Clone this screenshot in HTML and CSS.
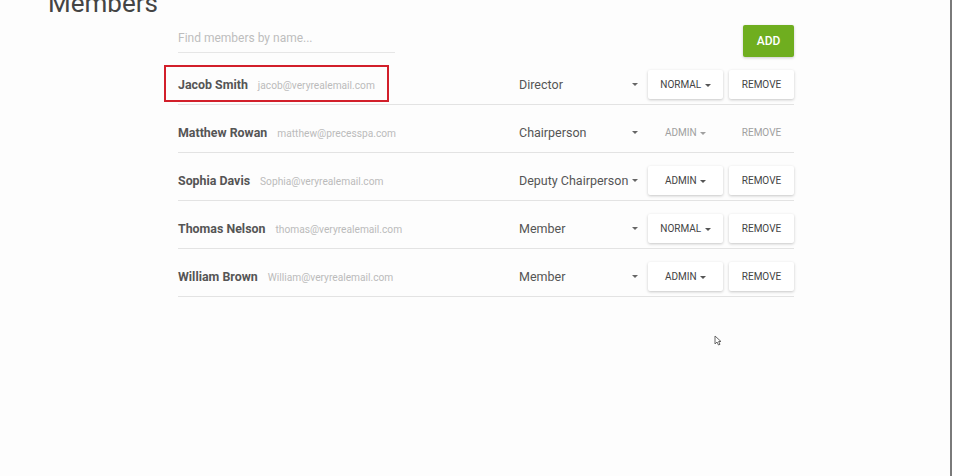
FILE: index.html
```html
<!DOCTYPE html>
<html>
<head>
<meta charset="utf-8">
<link rel="stylesheet" href="styles.css">
</head>
<body>
<div class="page">
  <h1 class="title">Members</h1>
  <div class="panel">
    <div class="toolbar">
      <div class="search">Find members by name...</div>
      <button class="add">ADD</button>
    </div>
    <div class="row">
      <div class="highlight"></div>
      <div class="who"><span class="name">Jacob Smith</span><span class="email">jacob@veryrealemail.com</span></div>
      <div class="role"><span>Director</span><span class="caret"></span></div>
      <button class="btn perm">NORMAL <span class="caret small"></span></button>
      <button class="btn remove">REMOVE</button>
    </div>
    <div class="row">
      <div class="who"><span class="name">Matthew Rowan</span><span class="email">matthew@precesspa.com</span></div>
      <div class="role"><span>Chairperson</span><span class="caret"></span></div>
      <button class="btn perm flat">ADMIN <span class="caret small"></span></button>
      <button class="btn remove flat">REMOVE</button>
    </div>
    <div class="row">
      <div class="who"><span class="name">Sophia Davis</span><span class="email">Sophia@veryrealemail.com</span></div>
      <div class="role"><span>Deputy Chairperson</span><span class="caret"></span></div>
      <button class="btn perm">ADMIN <span class="caret small"></span></button>
      <button class="btn remove">REMOVE</button>
    </div>
    <div class="row">
      <div class="who"><span class="name">Thomas Nelson</span><span class="email">thomas@veryrealemail.com</span></div>
      <div class="role"><span>Member</span><span class="caret"></span></div>
      <button class="btn perm">NORMAL <span class="caret small"></span></button>
      <button class="btn remove">REMOVE</button>
    </div>
    <div class="row">
      <div class="who"><span class="name">William Brown</span><span class="email">William@veryrealemail.com</span></div>
      <div class="role"><span>Member</span><span class="caret"></span></div>
      <button class="btn perm">ADMIN <span class="caret small"></span></button>
      <button class="btn remove">REMOVE</button>
    </div>
    <svg class="cursor" width="8" height="11" viewBox="0 0 8 11"><path d="M1 1 L1 9 L3 7 L4.5 10 L6 9.3 L4.6 6.5 L7 6.5 Z" fill="#fff" stroke="#666" stroke-width="1"/></svg>
  </div>
</div>
</body>
</html>
```
FILE: styles.css
```css
* { box-sizing: border-box; }
html, body { margin: 0; padding: 0; background: #fff; }
body { font-family: Roboto, "Liberation Sans", sans-serif; color: #555; }
.page {
  width: 952px;
  height: 476px;
  background: #fdfdfd;
  border-right: 2px solid #7a7a7a;
  overflow: hidden;
  position: relative;
}
.title {
  margin: -12px 0 0 48px;
  font-size: 26px;
  line-height: 30px;
  font-weight: 400;
  color: #444;
}
.panel {
  position: relative;
  margin: 7px 0 0 178px;
  width: 616px;
}
.toolbar {
  display: flex;
  justify-content: space-between;
  align-items: flex-start;
  height: 32px;
}
.search {
  margin-top: 2px;
  width: 217px;
  height: 26px;
  font-size: 12px;
  line-height: 22px;
  color: #bdbdbd;
  border-bottom: 1px solid #e6e6e6;
}
.add {
  width: 51px;
  height: 32px;
  border: none;
  border-radius: 2px;
  background: #6fae1f;
  color: #fff;
  font-family: Roboto, "Liberation Sans", sans-serif;
  font-size: 12px;
  font-weight: 500;
  padding: 0;
  box-shadow: 0 1px 3px rgba(0,0,0,0.2);
}
.row {
  position: relative;
  display: flex;
  align-items: center;
  height: 48px;
  padding-top: 8px;
  border-bottom: 1px solid #e3e3e3;
}
.highlight {
  position: absolute;
  left: -14px;
  top: 8px;
  width: 225px;
  height: 37px;
  border: 2px solid #d21f2a;
}
.who {
  flex: 1;
  display: flex;
  align-items: baseline;
  gap: 10px;
}
.name {
  font-size: 12.4px;
  font-weight: 700;
  color: #555;
}
.email {
  font-size: 10.2px;
  color: #bbb;
}
.role {
  width: 121px;
  display: flex;
  justify-content: space-between;
  align-items: center;
  font-size: 12.5px;
  color: #555;
  white-space: nowrap;
  padding-right: 2px;
}
.caret {
  display: inline-block;
  width: 0;
  height: 0;
  border-left: 3px solid transparent;
  border-right: 3px solid transparent;
  border-top: 3px solid #666;
}
.caret.small {
  vertical-align: middle;
  margin-left: 1px;
  border-top-color: #555;
}
.btn {
  height: 29px;
  border: none;
  border-radius: 2px;
  background: #fff;
  box-shadow: 0 1px 3px rgba(0,0,0,0.22);
  font-family: Roboto, "Liberation Sans", sans-serif;
  font-size: 10px;
  font-weight: 400;
  color: #444;
  padding: 0;
}
.perm { width: 75px; margin-left: 8px; }
.remove { width: 65px; margin-left: 6px; }
.btn.flat {
  box-shadow: none;
  background: transparent;
  color: #a0a0a0;
}
.btn.flat .caret { border-top-color: #a0a0a0; }
.cursor {
  position: absolute;
  left: 536px;
  top: 310px;
}
```
